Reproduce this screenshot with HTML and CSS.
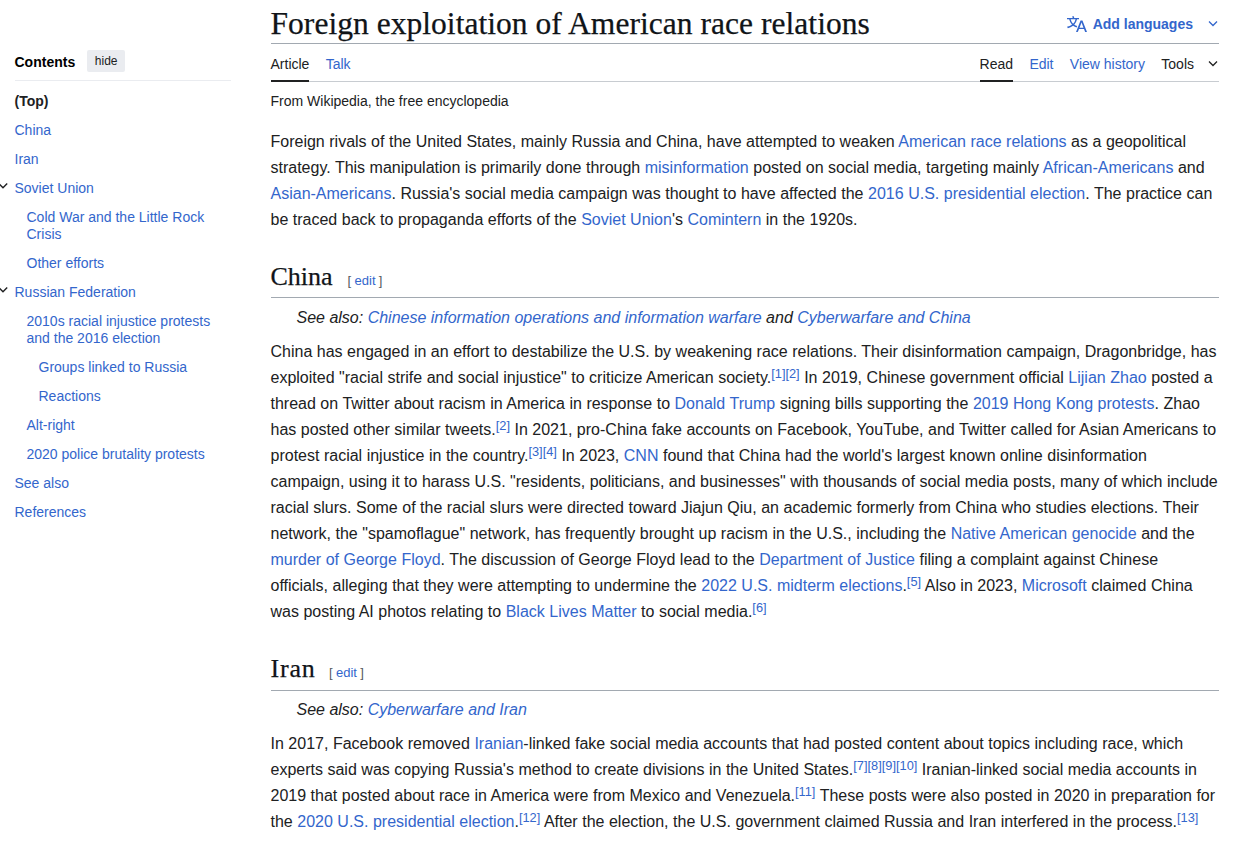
FILE: index.html
```html
<!DOCTYPE html>
<html lang="en">
<head>
<meta charset="utf-8">
<title>Foreign exploitation of American race relations - Wikipedia</title>
<link rel="stylesheet" href="styles.css">
</head>
<body>
<div class="page">
<nav class="toc">
  <div class="toc-head"><b>Contents</b><button class="hide">hide</button></div>
  <ul class="toc-list">
    <li class="top">(Top)</li>
    <li><a>China</a></li>
    <li><a>Iran</a></li>
    <li class="open"><svg class="toggle" viewBox="0 0 10 8"><path d="M.8 1.5 5 5.7 9.2 1.5"/></svg><a>Soviet Union</a></li>
    <li class="l2"><a>Cold War and the Little Rock<br>Crisis</a></li>
    <li class="l2"><a>Other efforts</a></li>
    <li class="open"><svg class="toggle" viewBox="0 0 10 8"><path d="M.8 1.5 5 5.7 9.2 1.5"/></svg><a>Russian Federation</a></li>
    <li class="l2"><a>2010s racial injustice protests<br>and the 2016 election</a></li>
    <li class="l3"><a>Groups linked to Russia</a></li>
    <li class="l3"><a>Reactions</a></li>
    <li class="l2"><a>Alt-right</a></li>
    <li class="l2"><a>2020 police brutality protests</a></li>
    <li><a>See also</a></li>
    <li><a>References</a></li>
  </ul>
</nav>
<main class="content">
  <header class="titlebar">
    <h1>Foreign exploitation of American race relations</h1>
    <a class="languages">
      <svg class="lang-icon" viewBox="0 0 20 20"><path d="M20 18h-1.440a.61.61 0 0 1-.4-.12.810.810 0 0 1-.230-.310L17 15h-5l-1 2.540a.770.770 0 0 1-.220.300.590.590 0 0 1-.400.140H9l4.550-11.470h1.890zm-3.530-4.310L14.890 9.500a11.620 11.620 0 0 1-.390-1.240q-.090.370-.190.690l-.190.560-1.580 4.190zm-6.300-1.580a13.430 13.430 0 0 1-2.910-1.410 11.460 11.460 0 0 0 2.810-5.370H12V4H7.310a4 4 0 0 0-.200-.560C6.870 2.790 6.600 2 6.600 2l-1.470.5s.4.890.6 1.500H0v1.330h2.150A11.230 11.230 0 0 0 5 10.700a17.190 17.190 0 0 1-5 2.100q.560.820.870 1.380a23.280 23.280 0 0 0 5.220-2.510 15.640 15.640 0 0 0 3.560 1.770zM3.630 5.330h4.910a8.110 8.110 0 0 1-2.450 4.450 9.110 9.110 0 0 1-2.460-4.450z"/></svg>
      <span>Add languages</span>
      <svg class="chev" viewBox="0 0 10 8"><path d="M1 1.500 5 5.500 9 1.500"/></svg>
    </a>
  </header>
  <div class="tabs">
    <div class="tabgroup"><span class="tab active">Article</span><a class="tab">Talk</a></div>
    <div class="tabgroup"><span class="tab active">Read</span><a class="tab">Edit</a><a class="tab">View history</a><span class="tab tools">Tools<svg class="chev" viewBox="0 0 10 8"><path d="M1 1.500 5 5.500 9 1.500"/></svg></span></div>
  </div>
  <div class="tagline">From Wikipedia, the free encyclopedia</div>
  <p class="lead">Foreign rivals of the United States, mainly Russia and China, have attempted to weaken <a>American race relations</a> as a geopolitical<br>
  strategy. This manipulation is primarily done through <a>misinformation</a> posted on social media, targeting mainly <a>African-Americans</a> and<br>
  <a>Asian-Americans</a>. Russia's social media campaign was thought to have affected the <a>2016 U.S. presidential election</a>. The practice can<br>
  be traced back to propaganda efforts of the <a>Soviet Union</a>'s <a>Comintern</a> in the 1920s.</p>

  <div class="section"><h2>China</h2><span class="edit">[ <a>edit</a> ]</span></div>
  <div class="hatnote">See also: <a>Chinese information operations and information warfare</a> and <a>Cyberwarfare and China</a></div>
  <p>China has engaged in an effort to destabilize the U.S. by weakening race relations. Their disinformation campaign, Dragonbridge, has<br>
  exploited "racial strife and social injustice" to criticize American society.<sup><a>[1]</a><a>[2]</a></sup> In 2019, Chinese government official <a>Lijian Zhao</a> posted a<br>
  thread on Twitter about racism in America in response to <a>Donald Trump</a> signing bills supporting the <a>2019 Hong Kong protests</a>. Zhao<br>
  has posted other similar tweets.<sup><a>[2]</a></sup> In 2021, pro-China fake accounts on Facebook, YouTube, and Twitter called for Asian Americans to<br>
  protest racial injustice in the country.<sup><a>[3]</a><a>[4]</a></sup> In 2023, <a>CNN</a> found that China had the world's largest known online disinformation<br>
  campaign, using it to harass U.S. "residents, politicians, and businesses" with thousands of social media posts, many of which include<br>
  racial slurs. Some of the racial slurs were directed toward Jiajun Qiu, an academic formerly from China who studies elections. Their<br>
  network, the "spamoflague" network, has frequently brought up racism in the U.S., including the <a>Native American genocide</a> and the<br>
  <a>murder of George Floyd</a>. The discussion of George Floyd lead to the <a>Department of Justice</a> filing a complaint against Chinese<br>
  officials, alleging that they were attempting to undermine the <a>2022 U.S. midterm elections</a>.<sup><a>[5]</a></sup> Also in 2023, <a>Microsoft</a> claimed China<br>
  was posting AI photos relating to <a>Black Lives Matter</a> to social media.<sup><a>[6]</a></sup></p>

  <div class="section iran"><h2>Iran</h2><span class="edit">[ <a>edit</a> ]</span></div>
  <div class="hatnote">See also: <a>Cyberwarfare and Iran</a></div>
  <p>In 2017, Facebook removed <a>Iranian</a>-linked fake social media accounts that had posted content about topics including race, which<br>
  experts said was copying Russia's method to create divisions in the United States.<sup><a>[7]</a><a>[8]</a><a>[9]</a><a>[10]</a></sup> Iranian-linked social media accounts in<br>
  2019 that posted about race in America were from Mexico and Venezuela.<sup><a>[11]</a></sup> These posts were also posted in 2020 in preparation for<br>
  the <a>2020 U.S. presidential election</a>.<sup><a>[12]</a></sup> After the election, the U.S. government claimed Russia and Iran interfered in the process.<sup><a>[13]</a></sup></p>
</main>
</div>
</body>
</html>
```
FILE: styles.css
```css
* { box-sizing: border-box; }
body {
  margin: 0;
  background: #fff;
  color: #202122;
  font: 16px/26px "Liberation Sans", Arial, sans-serif;
  overflow: hidden;
}
a { color: #36c; text-decoration: none; }
.page { display: flex; height: 854px; }

/* Contents sidebar */
.toc { width: 231px; padding: 43px 0 0 14.5px; font-size: 14px; line-height: 17px; flex: none; }
.toc-head { display: flex; align-items: center; gap: 12px; height: 38px; border-bottom: 1px solid #eaecf0; color: #000; }
.toc-head b { padding-top: 1px; }
.hide { width: 38px; height: 22px; margin-bottom: 1px; padding: 0; border: 0; border-radius: 2px; background: #eaecf0; color: #202122; font: 12px "Liberation Sans", Arial, sans-serif; }
.toc-list { list-style: none; margin: 0; padding: 12px 0 0; display: flex; flex-direction: column; gap: 12px; white-space: nowrap; }
.top { font-weight: bold; }
.l2 { padding-left: 12px; }
.l3 { padding-left: 24px; }
.open { position: relative; }
.toggle { position: absolute; left: -16.500px; top: 2px; width: 10px; height: 8px; fill: none; stroke: #202122; stroke-width: 1.4; }

/* Article */
.content { margin-left: 39.5px; width: 948.500px; flex: none; white-space: nowrap; }
.titlebar { height: 44px; display: flex; justify-content: space-between; border-bottom: 1px solid #a2a9b1; }
h1, h2 { margin: 0; font-family: Georgia, "Liberation Serif", serif; font-weight: normal; color: #101418; -webkit-text-stroke: .25px #101418; }
h1 { font-size: 31.500px; line-height: 36px; padding-top: 6px; letter-spacing: .04px; }
.languages { display: flex; align-items: center; height: 34px; margin-top: 7px; font-size: 14px; font-weight: bold; }
.lang-icon { width: 20px; height: 20px; fill: #36c; margin-right: 6px; }
.chev { width: 10px; height: 8px; fill: none; stroke: currentColor; stroke-width: 1.3; }
.languages .chev { margin: 0 1px 0 15px; }
.tabs { height: 38px; display: flex; justify-content: space-between; border-bottom: 1px solid #c8ccd1; font-size: 14px; line-height: 40px; }
.tabgroup { display: flex; gap: 16.300px; }
.tab { height: 38px; }
.active { border-bottom: 2px solid #202122; }
.tools { display: flex; align-items: center; line-height: 17px; padding-top: 3px; }
.tools .chev { margin: -1px 1px 0 14px; }
.tagline { padding-top: 11px; font-size: 14px; line-height: 17px; }
p { margin: 0; word-spacing: .06px; }
.lead { padding-top: 19px; }
.section { height: 65px; padding-top: 25px; display: flex; align-items: baseline; border-bottom: 1px solid #a2a9b1; }
h2 { font-size: 26px; line-height: 37px; }
.edit { margin-left: 15px; font-size: 13px; color: #54595d; word-spacing: -.3px; }
.hatnote { padding: 7px 0 8px 26px; font-style: italic; }
.iran { height: 66px; }
.iran h2 { letter-spacing: .8px; }
.iran .edit { margin-left: 13.500px; }
.iran + .hatnote { padding-top: 6px; }
sup { font-size: 12.800px; line-height: 1; vertical-align: baseline; position: relative; top: -5px; }
```
